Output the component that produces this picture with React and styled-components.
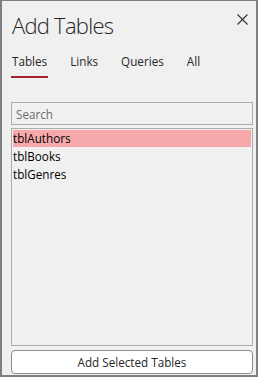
import React from 'react';
import styled, { createGlobalStyle } from 'styled-components';

const font = '"Open Sans", "Noto Sans", sans-serif';
const accent = '#a4262c';
const textSize = '11.7px';

const GlobalStyle = createGlobalStyle`
  html, body {
    margin: 0;
    padding: 0;
    background: #f0f0f0;
  }
  * {
    box-sizing: border-box;
  }
`;

const Panel = styled.div`
  width: 258px;
  height: 377px;
  display: flex;
  flex-direction: column;
  background: #f0f0f0;
  border: solid #7f7f7f;
  border-width: 1px 2px 2px 2px;
  padding: 0 3px 1px 9px;
  font-family: ${font};
  color: #1f1f1f;
`;

const Header = styled.div`
  display: flex;
  align-items: flex-start;
  justify-content: space-between;
  padding: 10px 5px 0 1px;
  height: 50px;
`;

const Title = styled.h1`
  margin: 0;
  font-size: 22px;
  font-weight: 300;
  line-height: 28px;
  color: #262626;
  letter-spacing: -0.75px;
`;

const CloseButton = styled.button`
  border: none;
  background: none;
  padding: 0;
  margin-top: 3px;
  width: 11px;
  height: 11px;
  display: flex;
  cursor: pointer;
`;

const Tabs = styled.div`
  display: flex;
  gap: 21px;
`;

const Tab = styled.div`
  padding: 0 1px 5px;
  font-size: ${textSize};
  line-height: 20px;
  color: #262626;
  border-bottom: 2px solid ${(p) => (p.$active ? accent : 'transparent')};
`;

const Search = styled.input`
  margin-top: 24px;
  height: 23px;
  width: 242px;
  border: 1px solid #adadad;
  background: #f0f0f0;
  padding: 0 4px;
  font-family: ${font};
  font-size: ${textSize};
  color: #1f1f1f;
  outline: none;

  &::placeholder {
    color: #6b6b6b;
  }
`;

const List = styled.div`
  margin-top: 3px;
  width: 242px;
  height: 218px;
  border: 1px solid #adadad;
  padding: 1px;
`;

const Row = styled.div`
  height: 18px;
  padding-bottom: 1px;
  font-size: ${textSize};
  line-height: 17px;
  color: #000;
  background: ${(p) => (p.$selected ? '#f7a8ab' : 'transparent')};
  background-clip: content-box;
`;

const AddButton = styled.button`
  margin-top: 4px;
  width: 242px;
  height: 24px;
  border: 1px solid #8f8f8f;
  border-radius: 4px;
  background: #fff;
  font-family: ${font};
  font-size: ${textSize};
  color: #262626;
  cursor: pointer;
`;

const tabs = ['Tables', 'Links', 'Queries', 'All'];
const tables = ['tblAuthors', 'tblBooks', 'tblGenres'];

export default function App() {
  return (
    <>
      <GlobalStyle />
      <Panel>
        <Header>
          <Title>Add Tables</Title>
          <CloseButton aria-label="Close">
            <svg width="11" height="11" viewBox="0 0 11 11">
              <path d="M0.5 0.5 L10.5 10.5 M10.5 0.5 L0.5 10.5" stroke="#333" strokeWidth="1.1" fill="none" />
            </svg>
          </CloseButton>
        </Header>
        <Tabs>
          {tabs.map((t, i) => (
            <Tab key={t} $active={i === 0}>{t}</Tab>
          ))}
        </Tabs>
        <Search placeholder="Search" />
        <List>
          {tables.map((t, i) => (
            <Row key={t} $selected={i === 0}>{t}</Row>
          ))}
        </List>
        <AddButton>Add Selected Tables</AddButton>
      </Panel>
    </>
  );
}
